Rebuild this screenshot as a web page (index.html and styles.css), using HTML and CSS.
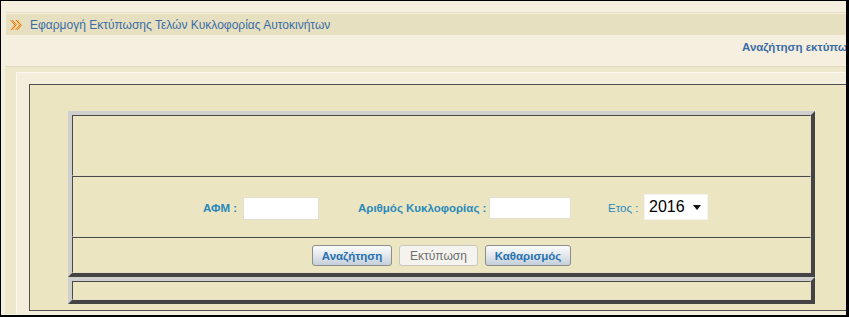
FILE: index.html
```html
<!DOCTYPE html>
<html lang="el">
<head>
    <meta charset="UTF-8">
    <meta name="viewport" content="width=device-width, initial-scale=1.0">
    <title>Εφαρμογή Εκτύπωσης Τελών Κυκλοφορίας Αυτοκινήτων</title>
    <link rel="stylesheet" href="styles.css">
</head>
<body>
    <div class="page">
        <div class="title-wrap">
            <div class="titlebar">
                <svg class="title-icon" width="13" height="10" viewBox="0 0 13 10">
                    <defs>
                        <pattern id="dots" width="2" height="2" patternUnits="userSpaceOnUse">
                            <rect width="2" height="2" fill="#f7c56a"/>
                            <rect width="1" height="1" fill="#e8741e"/>
                            <rect x="1" y="1" width="1" height="1" fill="#e8741e"/>
                        </pattern>
                    </defs>
                    <path d="M0 0h3l4 5-4 5H0l4-5z" fill="url(#dots)"/>
                    <path d="M5 0h3l4 5-4 5H5l4-5z" fill="url(#dots)"/>
                </svg>
                <span>Εφαρμογή Εκτύπωσης Τελών Κυκλοφορίας Αυτοκινήτων</span>
            </div>
        </div>

        <div class="linkbar">
            <a href="#" class="search-link">Αναζήτηση εκτύπωσης</a>
        </div>

        <div class="panel">
            <div class="frame">
                <div class="box">
                    <table class="grid">
                        <tr><td><div class="row-top"></div></td></tr>
                        <tr>
                            <td>
                                <form class="fields" id="searchForm">
                                    <label class="label label-afm" for="afm">ΑΦΜ :</label>
                                    <input type="text" id="afm" name="afm" class="input input-afm">
                                    <label class="label label-plate" for="plate">Αριθμός Κυκλοφορίας :</label>
                                    <input type="text" id="plate" name="plate" class="input input-plate">
                                    <label class="label label-year" for="year">Ετος :</label>
                                    <div class="select-wrap">
                                        <select id="year" name="year" class="year-select">
                                            <option>2016</option>
                                            <option>2015</option>
                                            <option>2014</option>
                                        </select>
                                        <svg class="select-arrow" width="8" height="5" viewBox="0 0 8 5"><path d="M0 0h8L4 5z" fill="#111"/></svg>
                                    </div>
                                </form>
                            </td>
                        </tr>
                        <tr>
                            <td>
                                <div class="row-buttons">
                                    <button type="button" class="btn btn-search">Αναζήτηση</button>
                                    <button type="button" class="btn btn-print" disabled>Εκτύπωση</button>
                                    <button type="button" class="btn btn-clear">Καθαρισμός</button>
                                </div>
                            </td>
                        </tr>
                    </table>
                    <table class="grid">
                        <tr><td><div class="row-foot"></div></td></tr>
                    </table>
                </div>
            </div>
        </div>
    </div>
</body>
</html>
```

FILE: styles.css
```css
body {
    margin: 0;
    background: #000;
    font-family: "Liberation Sans", Arial, sans-serif;
    font-size: 11px;
    overflow: hidden;
}
.page {
    margin: 1px 3px 2px 1px;
    height: 314px;
    background: #f5efdf;
    overflow: hidden;
}
.title-wrap {
    margin: 11px 0 0 5px;
    border-top: 1px solid #e3dcc0;
    padding-top: 1px;
}
.titlebar {
    height: 21px;
    background: #e6e0c0;
    display: flex;
    align-items: center;
    gap: 7px;
    padding-left: 4px;
    color: #3a6ca6;
    font-size: 12px;
}
.title-icon {
    flex: none;
}
.linkbar {
    height: 25px;
    padding: 6px 0 0 741px;
    white-space: nowrap;
}
.search-link {
    color: #3a6ca6;
    font-weight: bold;
    font-size: 11.5px;
    text-decoration: none;
}
.panel {
    margin-left: 4px;
    border-top: 1px solid #e2dac0;
    background: #ede7cb;
    padding: 5px 0 0 11px;
}
.frame {
    border-top: 1px solid #fbf8ee;
    border-left: 1px solid #fbf8ee;
    background: #f3eedb;
    padding: 11px 0 3px 12px;
}
.box {
    width: 880px;
    border: 1px solid #505050;
    background: #ebe5c2;
    padding: 26px 0 6px 38px;
}
.grid {
    width: 747px;
    border-collapse: separate;
    border-spacing: 0;
    border: 4px solid;
    border-color: #cfcfcf #444 #444 #cfcfcf;
}
.grid td {
    padding: 0;
    border: 1px solid;
    border-color: #4a4a4a #e4dec2 #e4dec2 #4a4a4a;
}
.row-top {
    height: 59px;
}
.fields {
    height: 59px;
    margin: 0;
    display: flex;
    align-items: center;
    padding-left: 130px;
}
.label {
    flex: none;
    color: #2a89ba;
    font-size: 11.5px;
    font-weight: bold;
    white-space: nowrap;
    padding-top: 2px;
    margin-right: 5px;
}
.label-afm {
    width: 35px;
}
.label-plate {
    width: 126px;
    margin-left: 39px;
}
.label-year {
    width: 30px;
    font-weight: normal;
    margin-left: 37px;
    margin-right: 6px;
}
.input {
    box-sizing: border-box;
    height: 23px;
    border: 1px solid #e2ded0;
    background: #fff;
    padding: 0 3px;
    font-size: 12px;
    margin-top: 3px;
}
.input-afm {
    width: 76px;
}
.input-plate {
    width: 82px;
    height: 22px;
}
.select-wrap {
    position: relative;
}
.year-select {
    -webkit-appearance: none;
    appearance: none;
    box-sizing: border-box;
    width: 64px;
    height: 26px;
    border: 1px solid #f4f4f0;
    border-radius: 0;
    background: #fff;
    padding: 0 0 0 4px;
    font-family: "Liberation Sans", Arial, sans-serif;
    font-size: 16px;
    color: #000;
}
.select-arrow {
    position: absolute;
    right: 7px;
    top: 11px;
    pointer-events: none;
}
.row-buttons {
    height: 34px;
    display: flex;
    align-items: center;
    justify-content: center;
    gap: 7px;
    padding-top: 1px;
    box-sizing: border-box;
}
.btn {
    box-sizing: border-box;
    height: 21px;
    padding: 0;
    border: 1px solid #8c8c8c;
    border-radius: 3px;
    background: linear-gradient(#fbfbfb, #e6eaee 45%, #c4cfda);
    color: #2671b0;
    font-family: "Liberation Sans", Arial, sans-serif;
    font-size: 11.5px;
    font-weight: bold;
    cursor: pointer;
}
.btn-search {
    width: 80px;
}
.btn-print {
    width: 79px;
    border-color: #c9c7bd;
    background: #f4f3ee;
    color: #6e6e6e;
    font-weight: normal;
    font-size: 12px;
    cursor: default;
}
.btn-clear {
    width: 86px;
}
.row-foot {
    height: 17px;
}
```
